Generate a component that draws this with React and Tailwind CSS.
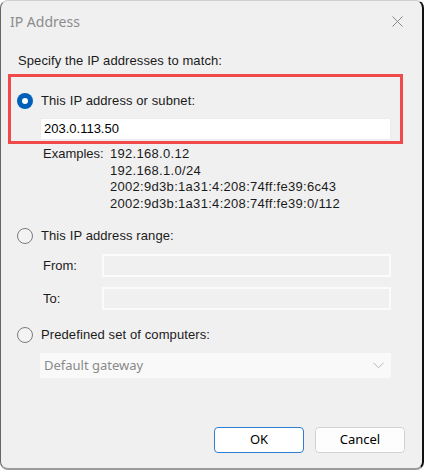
import React from 'react'

const body = { fontFamily: '"Liberation Sans", Arial, sans-serif' }
const ui = { fontFamily: '"Noto Sans", "Open Sans", sans-serif' }

const Radio = ({ checked }) => (
  <svg width="16" height="16" viewBox="0 0 16 16" className="shrink-0">
    {checked ? (
      <>
        <circle cx="8" cy="8" r="8" fill="#005fb8" />
        <circle cx="8" cy="8" r="3" fill="#ffffff" />
      </>
    ) : (
      <circle cx="8" cy="8" r="7.5" fill="#f3f3f3" stroke="#7a7a7a" strokeWidth="1" />
    )}
  </svg>
)

const RadioRow = ({ checked, label }) => (
  <div className="flex items-center gap-[8px] h-[16px] pl-[6px]">
    <Radio checked={checked} />
    <span className="text-[13px] leading-[16px] text-[#1b1b1b] tracking-[0.1px]">{label}</span>
  </div>
)

const RangeRow = ({ label }) => (
  <div className="flex items-center">
    <span className="w-[59px] pl-[35px] box-content text-[13px] text-[#1b1b1b]">{label}</span>
    <div className="h-[23px] w-[289px] border-2 border-[#fbfbfb] bg-[#f0f0f0]" />
  </div>
)

export default function App() {
  return (
    <div
      className="w-[424px] h-[470px] flex flex-col bg-[#f0f0f0] rounded-[8px] border border-l-[#666] border-t-[#cfcfcf] border-b-2 border-b-[#9a9a9a] border-r-2 border-r-[#111] overflow-hidden"
      style={body}
    >
      {/* title bar */}
      <div className="h-[40px] flex items-center justify-between pl-[9px] pr-[19px] shrink-0">
        <span className="text-[14px] text-[#8c8c8c]" style={ui}>IP Address</span>
        <svg width="11" height="11" viewBox="0 0 11 11">
          <path d="M0.5 0.5 L10.5 10.5 M10.5 0.5 L0.5 10.5" stroke="#8a8a8a" strokeWidth="1" fill="none" />
        </svg>
      </div>

      <div className="flex flex-col pl-[7px]">
        <div className="mt-[12px] pl-[10px] text-[13px] leading-[16px] text-[#1b1b1b] tracking-[0.1px]">
          Specify the IP addresses to match:
        </div>

        {/* highlighted option */}
        <div className="mt-[5px] w-[395px] h-[70px] border-[3px] border-[#f04a4a] pt-[16px] flex flex-col">
          <RadioRow checked label="This IP address or subnet:" />
          <div className="mt-[9px] ml-[29px] w-[351px] h-[22px] bg-white border border-[#ececec] flex items-center pl-[3px] text-[13px] text-black">
            203.0.113.50
          </div>
        </div>

        <div className="mt-[2px] pl-[35px] flex text-[13px] leading-[16.7px] text-[#1b1b1b]">
          <span className="w-[67px]">Examples:</span>
          <div className="flex flex-col tracking-[0.3px]">
            <span>192.168.0.12</span>
            <span>192.168.1.0/24</span>
            <span>2002:9d3b:1a31:4:208:74ff:fe39:6c43</span>
            <span>2002:9d3b:1a31:4:208:74ff:fe39:0/112</span>
          </div>
        </div>

        <div className="mt-[15px] pl-[3px]">
          <RadioRow label="This IP address range:" />
        </div>
        <div className="mt-[10px] flex flex-col gap-[10px]">
          <RangeRow label="From:" />
          <RangeRow label="To:" />
        </div>

        <div className="mt-[17px] pl-[3px]">
          <RadioRow label="Predefined set of computers:" />
        </div>
        <div className="mt-[10px] ml-[32px] w-[351px] h-[25px] bg-[#f9f9f9] flex items-center justify-between pl-[4px] pr-[7px]">
          <span className="text-[13px] text-[#8a8a8a]" style={ui}>Default gateway</span>
          <svg width="11" height="7" viewBox="0 0 11 7">
            <path d="M0.5 0.8 L5.5 5.8 L10.5 0.8" stroke="#b5b5b5" strokeWidth="1" fill="none" />
          </svg>
        </div>
      </div>

      {/* buttons */}
      <div className="mt-[49px] flex justify-end gap-[11px] pr-[17px]" style={ui}>
        <button className="w-[90px] h-[26px] rounded-[4px] bg-white border border-[#2f7fd0] text-[13px] text-black">
          OK
        </button>
        <button className="w-[90px] h-[26px] rounded-[4px] bg-[#fdfdfd] border border-[#d3d3d3] text-[13px] text-black">
          Cancel
        </button>
      </div>
    </div>
  )
}
